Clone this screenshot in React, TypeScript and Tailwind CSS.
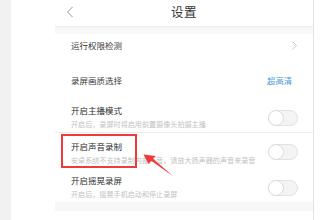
import React from "react";

const Toggle = () => (
  <div className="relative w-[30px] h-[16px] rounded-full bg-[#f4f4f4] border border-[#e2e2e2] shrink-0">
    <div className="absolute left-[-1px] top-[-1px] w-[16px] h-[16px] rounded-full bg-white border border-[#dcdcdc]" />
  </div>
);

export default function App() {
  const font = { fontFamily: '"Noto Sans CJK SC", "Noto Sans", sans-serif' };
  return (
    <div className="relative w-[320px] h-[220px] flex bg-white overflow-hidden" style={font}>
      <div className="w-[11px] h-full bg-[#f1f1f1]" />
      <div className="w-[44px] h-full" />
      <div className="w-[259px] h-full border-r border-[#e3e3e3] flex flex-col">
        <div className="h-[27px] border-b border-[#ececec] relative flex items-center justify-center">
          <svg className="absolute left-[11px] top-[6px]" width="8" height="12" viewBox="0 0 8 12">
            <path d="M6.5 1 L1.5 6 L6.5 11" fill="none" stroke="#8a8a8a" strokeWidth="0.9" />
          </svg>
          <span className="text-[12.5px] leading-none text-[#333] tracking-[0.5px] mt-[-2px]">设置</span>
        </div>
        <div className="h-[7px] bg-[#f8f8f8]" />
        <div className="h-[23px] flex items-center justify-between pl-[16px] pr-[16px]">
          <span className="text-[8.5px] leading-none text-[#3a3a3a]">运行权限检测</span>
          <svg width="5" height="9" viewBox="0 0 5 9">
            <path d="M0.5 0.5 L4.5 4.5 L0.5 8.5" fill="none" stroke="#c4c4c4" strokeWidth="0.9" />
          </svg>
        </div>
        <div className="h-[11px]" />
        <div className="h-[24px] flex items-center justify-between pl-[16px] pr-[21px]">
          <span className="text-[8.5px] leading-none text-[#3a3a3a]">录屏画质选择</span>
          <span className="text-[8.3px] leading-none text-[#4a9ad6]">超高清</span>
        </div>
        <div className="h-[41px] flex items-center justify-between pl-[16px] pr-[15px] border-b border-[#eeeeee]">
          <div className="flex flex-col pt-[9px]">
            <span className="text-[8.5px] leading-[12px] text-[#2e2e2e]">开启主播模式</span>
            <span className="text-[7.1px] leading-[10px] text-[#c2c2c2] mt-[3px]">开启后，录屏时将启用前置摄像头拍摄主播</span>
          </div>
          <div className="pt-[12px]"><Toggle /></div>
        </div>
        <div className="h-[36px] flex items-center justify-between pl-[16px] pr-[15px]">
          <div className="flex flex-col pt-[2px]">
            <span className="text-[8.5px] leading-[12px] text-[#2e2e2e]">开启声音录制</span>
            <span className="text-[7.1px] leading-[10px] text-[#c2c2c2] mt-[3px]">安卓系统不支持录制内部声音，请放大扬声器的声音来录音</span>
          </div>
          <div className="pt-[2px]"><Toggle /></div>
        </div>
        <div className="h-[33px] flex items-center justify-between pl-[16px] pr-[15px]">
          <div className="flex flex-col pt-[1px]">
            <span className="text-[8.5px] leading-[12px] text-[#2e2e2e]">开启摇晃录屏</span>
            <span className="text-[7.1px] leading-[10px] text-[#c2c2c2] mt-[3px]">开启后，摇晃手机启动和停止录屏</span>
          </div>
          <div className="pt-[5px]"><Toggle /></div>
        </div>
        <div className="h-[9px] bg-[#f7f7f7]" />
        <div className="flex-1" />
      </div>
      <div className="absolute left-[61px] top-[134px] w-[76px] h-[34px] border-2 border-[#f03b3b]" />
      <svg className="absolute left-0 top-0" width="320" height="220" viewBox="0 0 320 220">
        <polygon points="173.5,176.5 150.5,160.2 152.2,158 " fill="#f03b3b" />
        <polygon points="143.5,154.5 155.5,156 148.5,164" fill="#f03b3b" />
      </svg>
    </div>
  );
}
